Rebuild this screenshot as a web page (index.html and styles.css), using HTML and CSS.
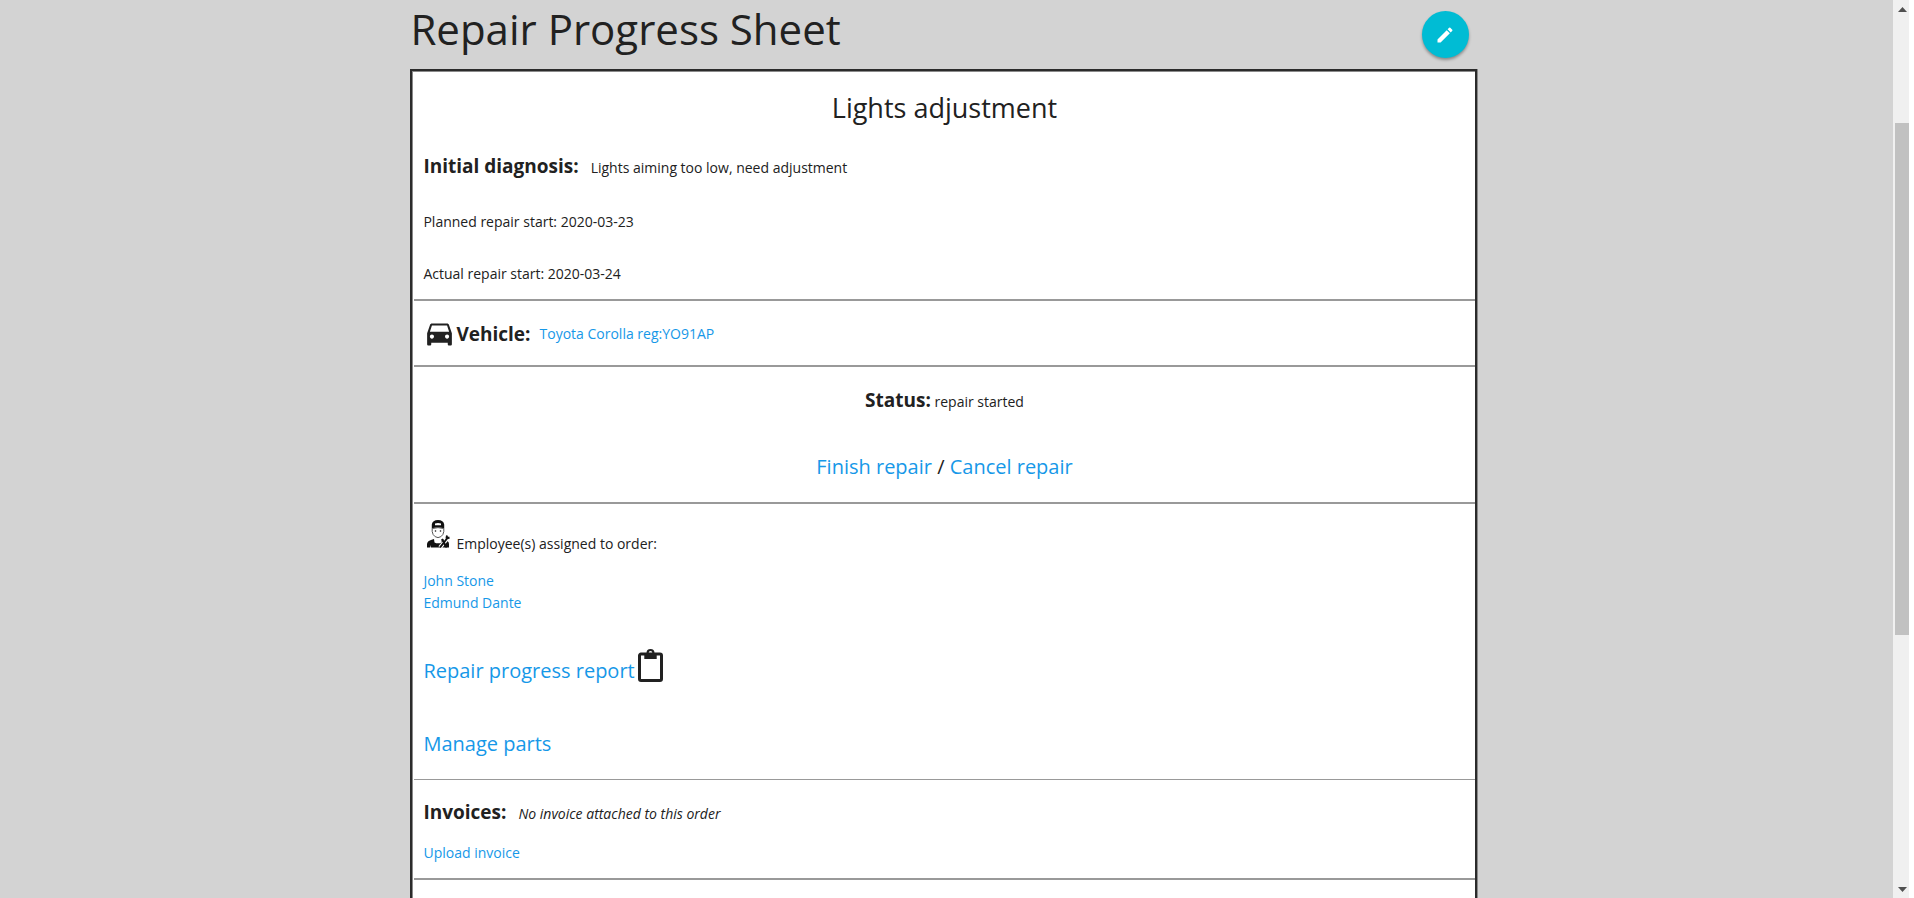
FILE: index.html
```html
<!DOCTYPE html>
<html lang="en">
<head>
<meta charset="utf-8">
<title>Repair Progress Sheet</title>
<link rel="stylesheet" href="styles.css">
</head>
<body>
<div class="viewport">
  <div class="page">
    <main class="container">
      <header class="page-head">
        <h1 class="page-title">Repair Progress Sheet</h1>
        <button class="fab" type="button" aria-label="Edit">
          <svg class="fab-icon" viewBox="0 0 24 24" aria-hidden="true"><path d="M3 17.25V21h3.75L17.81 9.94l-3.75-3.75L3 17.25zM20.71 7.04a1 1 0 0 0 0-1.41l-2.34-2.34a1 1 0 0 0-1.41 0l-1.83 1.83 3.75 3.75 1.83-1.83z"/></svg>
        </button>
      </header>
      <div class="sheet">
        <section class="block block-diagnosis">
          <h2 class="sheet-title">Lights adjustment</h2>
          <p class="diagnosis"><strong class="label">Initial diagnosis:</strong><span>Lights aiming too low, need adjustment</span></p>
          <p class="date">Planned repair start: 2020-03-23</p>
          <p class="date">Actual repair start: 2020-03-24</p>
        </section>
        <section class="block block-vehicle">
          <svg class="car" viewBox="0 0 24 24" aria-hidden="true"><path d="M18.92 5.010C18.720 4.420 18.160 4 17.500 4h-11c-.66 0-1.210.42-1.420 1.010L3 11v8c0 .55.45 1 1 1h1c.55 0 1-.45 1-1v-1h12v1c0 .55.45 1 1 1h1c.55 0 1-.45 1-1v-8l-2.080-5.990zM6.500 15c-.83 0-1.500-.67-1.500-1.500S5.670 12 6.500 12s1.500.67 1.500 1.500S7.330 15 6.500 15zm11 0c-.83 0-1.500-.67-1.500-1.500s.67-1.500 1.500-1.500 1.500.67 1.500 1.500-.67 1.500-1.500 1.500zM5 10l1.500-4.500h11L19 10H5z"/></svg>
          <strong class="label">Vehicle:</strong>
          <a class="vehicle-link" href="#vehicle">Toyota Corolla reg:YO91AP</a>
        </section>
        <section class="block block-status">
          <p class="status"><strong class="label">Status:</strong> repair started</p>
          <p class="actions"><a href="#finish">Finish repair</a> / <a href="#cancel">Cancel repair</a></p>
        </section>
        <section class="block block-staff">
          <div class="staff-head">
            <svg class="mechanic" viewBox="0 0 24 30" aria-hidden="true">
              <path d="M4.800 8.500V4.500Q5.500 0 11 0t6.200 4.500v4Q11 6.500 4.800 8.500z"/>
              <path class="cap-badge" d="M8 3.600Q11 2.200 14 3.600v1.600H8z"/>
              <path class="face" d="M5.200 8.500v3q.4 3.500 3 5.200 2.800 1.800 5.600 0 2.600-1.700 3-5.200v-3Q11 6.800 5.200 8.500z"/>
              <circle cx="8.500" cy="11" r=".8"/><circle cx="13.500" cy="11" r=".8"/>
              <path d="M0 27.500v-3.500q.3-3 4-4l3-1 .5 3.500q3.500 1.700 7 0l.4-3.500 3 1q4 .9 4.100 4v3.500h-3l-.5-2.500v2.500H4v-2.500l-.8 2.500z"/>
              <path class="wrench-edge" d="M13 27.500l8-10"/>
              <path class="wrench" d="M13 27.500l7-9M19.500 18.500l.5-3M19.500 18.500l3-1M15 19l4.500 8.500"/>
            </svg>
            <span>Employee(s) assigned to order:</span>
          </div>
          <ul class="staff">
            <li><a href="#john">John Stone</a></li>
            <li><a href="#edmund">Edmund Dante</a></li>
          </ul>
          <p class="report"><a href="#report">Repair progress report</a>
            <svg class="clipboard" viewBox="0 0 25 33" aria-hidden="true"><path class="board" d="M3 5h19a1.500 1.500 0 0 1 1.500 1.500v23.500a1.500 1.500 0 0 1-1.500 1.500H3a1.500 1.500 0 0 1-1.500-1.500V6.500A1.500 1.500 0 0 1 3 5z"/><path fill-rule="evenodd" d="M6.300 4h2.200a4 4 0 0 1 8 0h2.200v6H6.300zM12.500 2a1.800 1.800 0 1 0 0 3.600 1.800 1.800 0 0 0 0-3.600z"/></svg>
          </p>
          <p class="parts"><a href="#parts">Manage parts</a></p>
        </section>
        <section class="block block-invoices">
          <p class="invoices"><strong class="label">Invoices:</strong><em>No invoice attached to this order</em></p>
          <p class="upload"><a href="#upload">Upload invoice</a></p>
        </section>
      </div>
    </main>
  </div>
  <div class="scrollbar" aria-hidden="true">
    <svg class="arrow" viewBox="0 0 9 5"><path d="M0 5L4.500 0 9 5z"/></svg>
    <div class="track"><div class="thumb"></div></div>
    <svg class="arrow" viewBox="0 0 9 5"><path d="M0 0l4.500 5L9 0z"/></svg>
  </div>
</div>
</body>
</html>
```
FILE: styles.css
```css
* { box-sizing: border-box; }
body {
  margin: 0;
  background: #fff;
  color: #212121;
  font: 14px/22px "Open Sans", "Noto Sans", sans-serif;
}
h1, h2, p, ul { margin: 0; padding: 0; font-weight: 400; }
ul { list-style: none; }
a { color: #1698e8; text-decoration: none; }

.viewport {
  display: flex;
  height: 100vh;
  overflow: hidden;
  padding-right: 5px;
}
.page { flex: 1; padding-right: 6px; background: #d3d3d3; }
.container { width: 56.5%; margin: 0 auto; }
.page-head {
  display: flex;
  align-items: center;
  justify-content: space-between;
  height: 69px;
  padding-right: 8px;
}
.page-title { padding-bottom: 12px; font-size: 42px; line-height: 56px; }
.fab {
  width: 47px;
  height: 47px;
  padding: 0;
  border: 0;
  border-radius: 50%;
  background: #00bcd4;
  box-shadow: 0 2px 3px rgba(0, 0, 0, .35);
}
.fab-icon { display: block; width: 20px; height: 20px; margin: auto; fill: #fff; }

.sheet {
  min-height: 100vh;
  padding: 2px 0 2px 2px;
  border: 2px solid #2b2b2b;
  background: #fff;
  box-shadow: inset 1px 1px 0 #8a8a8a, 1px 0 0 #8a8a8a;
}
.block { padding: 0 9px; border-bottom: 2px solid #999; }
.label { font-size: 19px; line-height: 28px; font-weight: 700; }

.sheet-title { padding-top: 15px; font-size: 27px; line-height: 40px; text-align: center; }
.diagnosis { display: flex; align-items: baseline; gap: 12px; padding-top: 24px; }
.date { padding-top: 30px; }
.diagnosis + .date { padding-top: 31px; }
.block-diagnosis { padding-bottom: 14px; }

.block-vehicle { display: flex; align-items: center; min-height: 66px; padding-top: 2px; }
.car { width: 33px; height: 33px; fill: #212121; }
.vehicle-link { margin-left: 9px; }

.block-status { padding-top: 19px; padding-bottom: 18px; text-align: center; }
.actions { padding-top: 36px; font-size: 20px; line-height: 34px; }

.staff-head { display: flex; gap: 5px; padding-top: 16px; }
.staff-head span { padding-top: 13px; }
.mechanic { width: 24px; height: 30px; margin-left: 4px; fill: #111; }
.mechanic .cap-badge { fill: #fff; }
.mechanic .face { fill: #fff; stroke: #555; stroke-width: 1; }
.mechanic .wrench { fill: none; stroke: #111; stroke-width: 2; }
.mechanic .wrench-edge { fill: none; stroke: #fff; stroke-width: 4; }
.staff { padding-top: 15px; }
.report { display: flex; gap: 3px; padding-top: 33px; font-size: 20px; line-height: 48px; }
.clipboard { width: 25px; height: 33px; margin-top: 2px; overflow: visible; fill: #212121; }
.clipboard .board { fill: none; stroke: #212121; stroke-width: 3; }
.parts { padding-top: 24px; font-size: 20px; line-height: 50px; }
.block-staff { padding-bottom: 10px; border-bottom-width: 1px; }

.invoices { display: flex; align-items: baseline; gap: 12px; padding-top: 18px; }
.upload { padding-top: 16px; padding-bottom: 14px; }

.scrollbar {
  display: flex;
  flex: 0 0 16px;
  flex-direction: column;
  align-items: center;
  padding: 7px 0 6px 2px;
  background: #f0f0f0;
}
.arrow { width: 9px; height: 5px; fill: #505050; }
.track { flex: 1; width: 14px; padding-top: 111px; }
.thumb { height: 67%; background: #c1c1c1; }
```
